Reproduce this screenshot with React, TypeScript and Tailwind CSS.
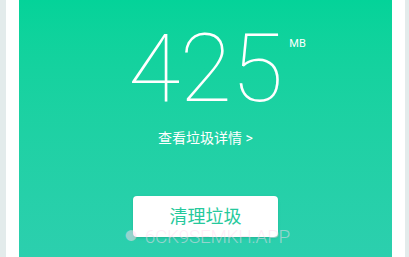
export default function App() {
  return (
    <div className="relative flex h-[257px] w-[409px] overflow-hidden bg-[#e3ebeb] font-['Roboto','Noto_Sans_CJK_SC',sans-serif]">
      <div className="ml-[6px] flex w-[399px] bg-white px-[13px]">
        <div className="flex w-full flex-col items-center bg-gradient-to-b from-[#04d399] to-[#2ccfae]">
          <div className="relative mt-[15px] flex items-start">
            <span className="text-[95px] leading-[108px] font-thin tracking-[-0.5px] text-white">425</span>
            <span className="absolute top-[21px] -right-[23px] text-[11px] font-normal text-white">MB</span>
          </div>
          <a className="mt-[5px] text-[14px] leading-[20px] text-white">查看垃圾详情 &gt;</a>
          <button className="mt-[48px] h-[41px] w-[145px] rounded-[4px] bg-white text-[18px] text-[#26c99c] shadow-sm">
            清理垃圾
          </button>
        </div>
      </div>
      <div className="pointer-events-none absolute top-[223px] left-[125px] flex items-center gap-[8px] text-[19px] font-light tracking-[-0.3px] text-[#ffd9ef]/50">
        <span className="text-[12px]">●</span>
        <span>6CK9SEMKH.APP</span>
      </div>
    </div>
  );
}
